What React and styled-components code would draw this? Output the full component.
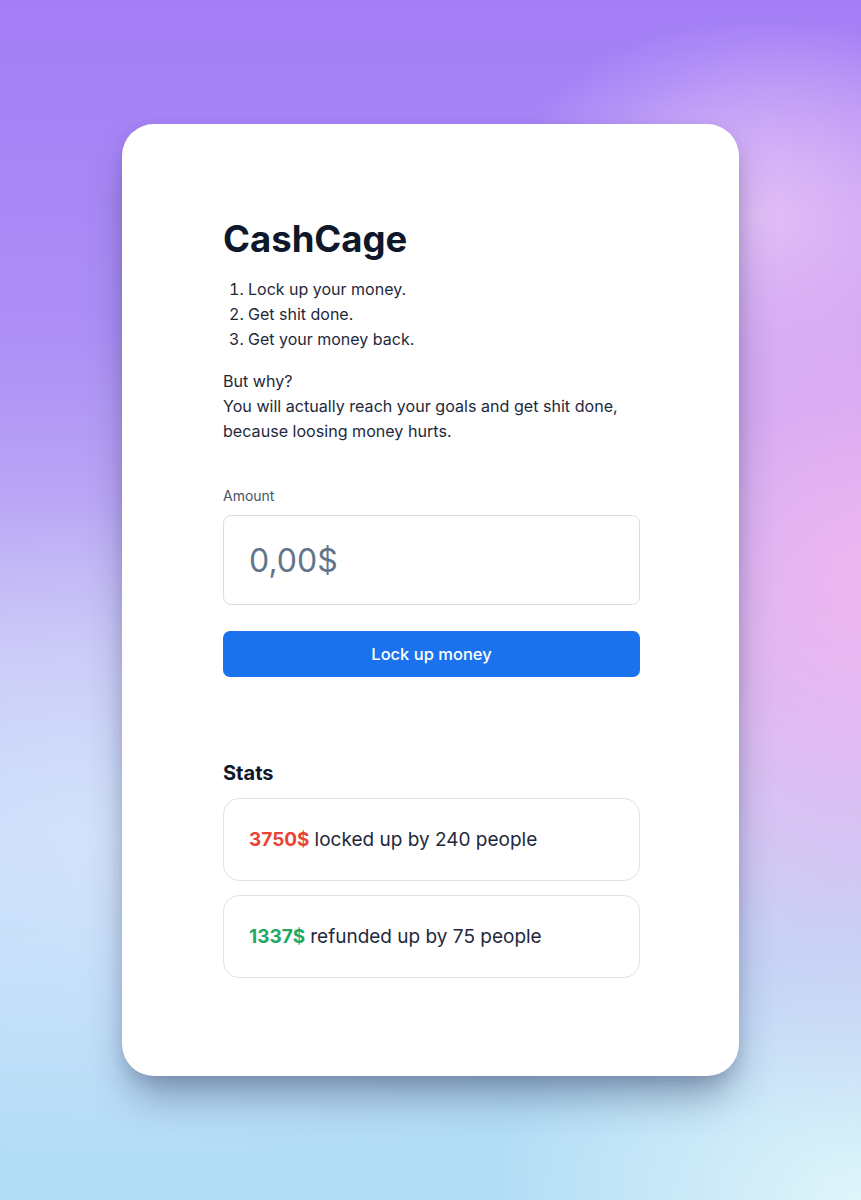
import styled, { createGlobalStyle } from 'styled-components';

const GlobalStyle = createGlobalStyle`
    * {
        box-sizing: border-box;
    }
    body {
        margin: 0;
        font-family: Inter, 'Noto Sans', 'Liberation Sans', sans-serif;
        color: #1e293b;
        -webkit-font-smoothing: antialiased;
    }
`;

const Page = styled.div`
    min-height: 1200px;
    display: flex;
    align-items: center;
    justify-content: center;
    background:
        radial-gradient(ellipse 420px 560px at 100% 48%, rgba(240, 182, 240, 0.95), rgba(240, 182, 240, 0) 100%),
        radial-gradient(ellipse 260px 200px at 88% 18%, rgba(226, 200, 250, 0.9), rgba(226, 200, 250, 0) 100%),
        radial-gradient(ellipse 380px 260px at 100% 100%, rgba(226, 246, 250, 0.95), rgba(226, 246, 250, 0) 100%),
        radial-gradient(ellipse 700px 340px at 15% 70%, rgba(214, 228, 252, 0.9), rgba(214, 228, 252, 0) 100%),
        linear-gradient(180deg, #a47ef6 0%, #ad8ff6 28%, #c6bcf5 55%, #b6dcf8 78%, #b0dcf6 100%);
`;

const Card = styled.main`
    width: 617px;
    height: 952px;
    background: #ffffff;
    border-radius: 32px;
    padding: 95px 99px 0 101px;
    box-shadow:
        0 26px 40px -8px rgba(40, 50, 90, 0.45),
        0 6px 14px rgba(40, 40, 80, 0.12);
`;

const Title = styled.h1`
    margin: 0;
    font-size: 36.5px;
    line-height: 40px;
    font-weight: 700;
    color: #0f172a;
`;

const Steps = styled.ol`
    margin: 18px 0 0;
    padding-left: 25px;
    font-size: 16px;
    line-height: 25px;
    color: #1e293b;
`;

const Text = styled.p`
    margin: 17px 0 0;
    font-size: 16.1px;
    line-height: 25px;
    color: #1e293b;
`;

const Label = styled.label`
    display: block;
    margin-top: 42px;
    font-size: 14px;
    line-height: 20px;
    color: #475569;
`;

const AmountInput = styled.input`
    display: block;
    width: 100%;
    height: 90px;
    margin-top: 9px;
    padding: 0 25px;
    border: 1px solid #d9dce1;
    border-radius: 8px;
    font-family: inherit;
    font-size: 32px;
    color: #0f172a;
    background: #fff;

    &::placeholder {
        color: #64748b;
    }
    &:focus {
        outline: none;
    }
`;

const Button = styled.button`
    display: block;
    width: 100%;
    height: 46px;
    margin-top: 26px;
    border: none;
    border-radius: 7px;
    background: #1a73ec;
    color: #fff;
    font-family: inherit;
    font-size: 16.5px;
    font-weight: 500;
    cursor: pointer;
`;

const SectionTitle = styled.h2`
    margin: 82px 0 0;
    font-size: 20px;
    line-height: 28px;
    font-weight: 700;
    color: #0f172a;
`;

const StatList = styled.div`
    display: flex;
    flex-direction: column;
    gap: 14px;
    margin-top: 11px;
`;

const StatCard = styled.div`
    height: 83px;
    display: flex;
    align-items: center;
    padding: 0 25px;
    border: 1px solid #dfe2e6;
    border-radius: 16px;
    font-size: 19px;
    color: #1e293b;
`;

const Amount = styled.strong`
    font-weight: 700;
    color: ${(p) => (p.$tone === 'red' ? '#ea4335' : '#1fa965')};
    margin-right: 5px;
`;

const stats = [
    { amount: '3750$', text: 'locked up by 240 people', tone: 'red' },
    { amount: '1337$', text: 'refunded up by 75 people', tone: 'green' },
];

const App = () => {
    return (
        <Page>
            <GlobalStyle />
            <Card>
                <Title>CashCage</Title>
                <Steps>
                    <li>Lock up your money.</li>
                    <li>Get shit done.</li>
                    <li>Get your money back.</li>
                </Steps>
                <Text>
                    But why?
                    <br />
                    You will actually reach your goals and get shit done, because loosing money hurts.
                </Text>

                <Label htmlFor="amount">Amount</Label>
                <AmountInput id="amount" type="text" placeholder="0,00$" />
                <Button type="button">Lock up money</Button>

                <SectionTitle>Stats</SectionTitle>
                <StatList>
                    {stats.map((s) => (
                        <StatCard key={s.amount}>
                            <Amount $tone={s.tone}>{s.amount}</Amount>
                            {s.text}
                        </StatCard>
                    ))}
                </StatList>
            </Card>
        </Page>
    );
};

export default App;
